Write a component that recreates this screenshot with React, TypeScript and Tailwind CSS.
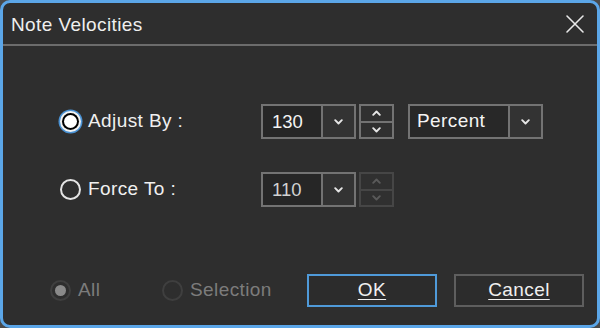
import React from 'react';

const Chevron: React.FC<{ up?: boolean; color?: string }> = ({ up, color = '#e6e6e6' }) => (
  <svg width="9" height="6" viewBox="0 0 9 6" fill="none">
    <path
      d={up ? 'M1.2 4.8 L4.5 1.5 L7.8 4.8' : 'M1.2 1.2 L4.5 4.5 L7.8 1.2'}
      stroke={color}
      strokeWidth="1.9"
      strokeLinecap="round"
      strokeLinejoin="round"
    />
  </svg>
);

const Radio: React.FC<{ checked?: boolean; disabled?: boolean }> = ({ checked, disabled }) => {
  if (disabled) {
    return (
      <div className="w-[21px] h-[21px] rounded-full border-2 border-[#3f3f3f] flex items-center justify-center">
        {checked && <div className="w-[11px] h-[11px] rounded-full bg-[#8a8a8a]" />}
      </div>
    );
  }
  if (checked) {
    return (
      <div className="w-[21px] h-[21px] rounded-full bg-[#f2f2f2] p-[2px] shadow-[0_0_0_1.5px_#4a92d4]">
        <div className="w-full h-full rounded-full bg-black p-[2px]">
          <div className="w-full h-full rounded-full bg-white" />
        </div>
      </div>
    );
  }
  return <div className="w-[21px] h-[21px] rounded-full border-2 border-[#e4e4e4]" />;
};

const SpinBox: React.FC<{ value: string; dim?: boolean }> = ({ value, dim }) => (
  <div className="flex w-[95px] h-[35px] border-2 border-[#737373]">
    <div
      className={`flex-1 bg-[#262626] flex items-center pl-[9px] text-[18.5px] ${dim ? 'text-[#d2d2d2]' : 'text-[#f4f4f4]'}`}
    >
      {value}
    </div>
    <div className="w-[33px] border-l-2 border-[#737373] bg-[#333333] flex items-center justify-center">
      <Chevron />
    </div>
  </div>
);

const Stepper: React.FC<{ disabled?: boolean }> = ({ disabled }) => {
  const border = disabled ? 'border-[#464646]' : 'border-[#737373]';
  const color = disabled ? '#5a5a5a' : '#e6e6e6';
  return (
    <div className={`flex flex-col w-[35px] h-[35px] border-2 ${border} bg-[#303030]`}>
      <div className={`flex-1 flex items-center justify-center border-b-2 ${border}`}>
        <Chevron up color={color} />
      </div>
      <div className="flex-1 flex items-center justify-center">
        <Chevron color={color} />
      </div>
    </div>
  );
};

const App: React.FC = () => {
  return (
    <div
      className="w-[600px] h-[328px] bg-[#4a4a4a]"
      style={{ fontFamily: '"Liberation Sans", Arial, sans-serif' }}
    >
      <div className="w-full h-full rounded-[10px] border-[3px] border-[#5ba6e8] bg-[#2e2e2e] flex flex-col overflow-hidden">
        {/* Title bar */}
        <div className="h-[41px] flex items-center justify-between pl-[8px] pr-[12px] shrink-0">
          <span className="text-[19px] tracking-[0.4px] text-[#efefef] leading-none mt-[1px]">Note Velocities</span>
          <svg width="20" height="20" viewBox="0 0 20 20" fill="none">
            <path d="M2 2 L18 18 M18 2 L2 18" stroke="#e8e8e8" strokeWidth="1.6" strokeLinecap="round" />
          </svg>
        </div>
        <div className="h-[2px] bg-[#6c6c6c] shrink-0" />

        {/* Body */}
        <div className="flex flex-col pl-[57px] pt-[58px]">
          <div className="flex items-center">
            <div className="w-[201px] flex items-center">
              <Radio checked />
              <span className="ml-[7px] text-[19px] tracking-[0.4px] text-[#f0f0f0]">Adjust By :</span>
            </div>
            <SpinBox value="130" />
            <div className="ml-[3px]">
              <Stepper />
            </div>
            <div className="ml-[14px] flex w-[135px] h-[35px] border-2 border-[#737373]">
              <div className="flex-1 bg-[#282828] flex items-center pl-[7px] text-[19px] tracking-[0.4px] text-[#f4f4f4]">
                Percent
              </div>
              <div className="w-[33px] border-l-2 border-[#737373] bg-[#333333] flex items-center justify-center">
                <Chevron />
              </div>
            </div>
          </div>

          <div className="flex items-center mt-[33px]">
            <div className="w-[201px] flex items-center">
              <Radio />
              <span className="ml-[7px] text-[19px] tracking-[0.4px] text-[#f0f0f0]">Force To :</span>
            </div>
            <SpinBox value="110" dim />
            <div className="ml-[3px]">
              <Stepper disabled />
            </div>
          </div>
        </div>

        {/* Footer */}
        <div className="flex items-center mt-[67px] pl-[47px]">
          <div className="flex items-center w-[112px]">
            <Radio checked disabled />
            <span className="ml-[7px] text-[19px] tracking-[0.4px] text-[#7c7c7c]">All</span>
          </div>
          <div className="flex items-center w-[145px]">
            <Radio disabled />
            <span className="ml-[7px] text-[19px] tracking-[0.4px] text-[#7c7c7c]">Selection</span>
          </div>
          <button className="w-[130px] h-[33px] border-2 border-[#4f9ad9] bg-[#2c2c2c] text-[19px] tracking-[0.4px] text-[#f0f0f0] underline underline-offset-[3px]">
            OK
          </button>
          <button className="ml-[17px] w-[130px] h-[33px] border-2 border-[#5e5e5e] bg-[#2c2c2c] text-[19px] tracking-[0.4px] text-[#f0f0f0] underline underline-offset-[3px]">
            Cancel
          </button>
        </div>
      </div>
    </div>
  );
};

export default App;
